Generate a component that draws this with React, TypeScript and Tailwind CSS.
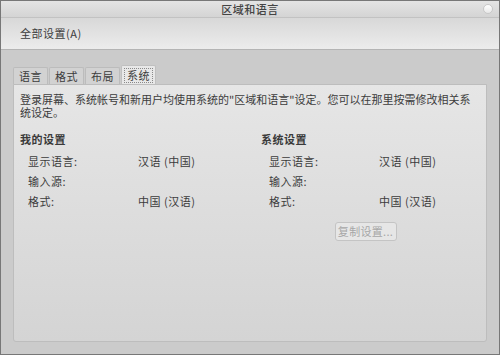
const FONT = "font-['Noto_Sans_CJK_SC','Noto_Sans',sans-serif]";

const TABS = ['语言', '格式', '布局', '系统'];

type Row = { label: string; value: string };

const ROWS: Row[] = [
  { label: '显示语言:', value: '汉语 (中国)' },
  { label: '输入源:', value: '' },
  { label: '格式:', value: '中国 (汉语)' },
];

function SettingsColumn({ title, showButton }: { title: string; showButton?: boolean }) {
  return (
    <div className="flex flex-col">
      <div className="h-[20px] leading-[20px] font-bold text-[#3a3a3a]">{title}</div>
      <div className="mt-[2px] flex flex-col pl-[8px]">
        {ROWS.map((row) => (
          <div key={row.label} className="flex h-[20px] items-center">
            <span className="w-[110px]">{row.label}</span>
            <span>{row.value}</span>
          </div>
        ))}
      </div>
      {showButton && (
        <div className="mt-[11px] flex justify-center pr-[10px]">
          <button className="h-[19px] w-[62px] rounded-[3px] border border-[#c4c4c4] bg-[#e6e6e6] text-[11px] leading-none tracking-[0.3px] text-[#a6a6a6]">
            复制设置...
          </button>
        </div>
      )}
    </div>
  );
}

export default function App() {
  return (
    <div className={`${FONT} flex h-[355px] w-[500px] flex-col border border-[#777777] bg-[#cbcbcb] text-[11px] tracking-[0.5px] text-[#3c3c3c]`}>
      <div className="relative flex h-[17px] shrink-0 items-center justify-center border-b border-[#c2c2c2] bg-gradient-to-b from-[#e4e4e4] to-[#d4d4d4]">
        <span className="text-[11px] font-medium text-[#444444]">区域和语言</span>
        <div className="absolute right-[6px] top-[3px] h-[10px] w-[10px] rounded-full border border-[#c8c8c8] bg-gradient-to-b from-[#ffffff] to-[#e8e8e8]" />
      </div>

      <div className="flex h-[32px] shrink-0 items-center border-b border-[#b4b4b4] bg-gradient-to-b from-[#d8d8d8] to-[#ececec] pl-[19px]">
        <span className="text-[11px] text-[#3c3c3c]">全部设置(A)</span>
      </div>

      <div className="flex flex-1 flex-col px-[12px] pb-[12px] pt-[15px]">
        <div className="flex h-[19px] items-end gap-[1px]">
          {TABS.map((tab, i) =>
            i === 3 ? (
              <div
                key={tab}
                className="flex h-[19px] w-[35px] items-center justify-center rounded-t-[2px] border border-b-0 border-[#c0c0c0] bg-[#e8e8e8]"
              >
                <span className="border border-dotted border-[#8a8a8a] px-[2px] leading-[13px]">{tab}</span>
              </div>
            ) : (
              <div
                key={tab}
                className="flex h-[17px] w-[35px] items-center justify-center rounded-t-[2px] border border-b-0 border-[#bcbcbc] bg-[#d2d2d2]"
              >
                {tab}
              </div>
            )
          )}
        </div>

        <div className="flex-1 rounded-b-[3px] border border-[#bdbdbd] bg-gradient-to-b from-[#e6e6e6] to-[#d4d4d4] px-[6px] pt-[8px]">
          <p className="whitespace-nowrap leading-[13px] tracking-[0px]">
            登录屏幕、系统帐号和新用户均使用系统的"区域和语言"设定。您可以在那里按需修改相关系
            <br />
            统设定。
          </p>
          <div className="mt-[10px] grid grid-cols-[241px_1fr]">
            <SettingsColumn title="我的设置" />
            <SettingsColumn title="系统设置" showButton />
          </div>
        </div>
      </div>
    </div>
  );
}
